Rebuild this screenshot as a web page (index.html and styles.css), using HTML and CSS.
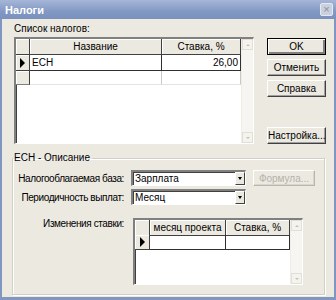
FILE: index.html
```html
<!DOCTYPE html>
<html lang="ru">
<head>
    <meta charset="UTF-8">
    <title>Налоги</title>
    <link rel="stylesheet" href="styles.css">
</head>
<body>
    <div class="window">
        <div class="titlebar">
            <span class="title">Налоги</span>
            <span class="close">&times;</span>
        </div>
        <div class="client">
            <div class="top">
                <div class="taxes">
                    <div class="label">Список налогов:</div>
                    <div class="grid taxes-grid">
                        <div class="sheet">
                            <div class="row head">
                                <div class="ind"></div>
                                <div class="cell">Название</div>
                                <div class="cell">Ставка, %</div>
                            </div>
                            <div class="row current">
                                <div class="ind"><span class="pointer"></span></div>
                                <div class="cell text">ЕСН</div>
                                <div class="cell num">26,00</div>
                            </div>
                            <div class="row blank">
                                <div class="ind"></div>
                                <div class="cell"></div>
                                <div class="cell"></div>
                            </div>
                        </div>
                        <div class="vscroll">
                            <span class="arrow up"></span>
                            <span class="arrow down"></span>
                        </div>
                    </div>
                </div>
                <div class="buttons">
                    <button class="btn default">OK</button>
                    <button class="btn">Отменить</button>
                    <button class="btn">Справка</button>
                    <button class="btn setup">Настройка...</button>
                </div>
            </div>

            <fieldset class="group">
                <legend>ЕСН - Описание</legend>
                <div class="field-row">
                    <label class="caption">Налогооблагаемая база:</label>
                    <div class="combo">
                        <span class="value">Зарплата</span>
                        <span class="drop"></span>
                    </div>
                    <button class="btn formula" disabled>Формула...</button>
                </div>
                <div class="field-row second">
                    <label class="caption">Периодичность выплат:</label>
                    <div class="combo">
                        <span class="value">Месяц</span>
                        <span class="drop"></span>
                    </div>
                </div>
                <div class="rates-row">
                    <label class="caption">Изменения ставки:</label>
                    <div class="grid rates-grid">
                        <div class="sheet">
                            <div class="row head">
                                <div class="ind"></div>
                                <div class="cell">месяц проекта</div>
                                <div class="cell">Ставка, %</div>
                            </div>
                            <div class="row current">
                                <div class="ind"><span class="pointer"></span></div>
                                <div class="cell"></div>
                                <div class="cell"></div>
                            </div>
                        </div>
                        <div class="vscroll">
                            <span class="arrow up"></span>
                            <span class="arrow down"></span>
                        </div>
                    </div>
                </div>
            </fieldset>
        </div>
    </div>
</body>
</html>
```

FILE: styles.css
```css
body {
    margin: 0;
    font-family: 'Liberation Sans', Arial, sans-serif;
    font-size: 10px;
    color: #000;
    background-color: #ece9e1;
}

.window {
    box-sizing: border-box;
    width: 336px;
    height: 300px;
    background-color: #ece9e1;
    border-left: 2px solid #8196c0;
    border-right: 2px solid #8196c0;
    border-bottom: 3px solid #8196c0;
}

.titlebar {
    height: 19px;
    margin: 0 -2px;
    padding: 0 2px 0 5px;
    display: flex;
    align-items: center;
    justify-content: space-between;
    background: linear-gradient(to bottom, #a6b6d7, #8298c4 60%, #7b91bd);
}

.title {
    color: #fff;
    font-size: 11px;
    font-weight: bold;
}

.close {
    width: 11px;
    height: 11px;
    margin-right: 1px;
    border: 1px solid #e6e9f0;
    border-radius: 2px;
    background-color: #c9d0de;
    color: #8a8f99;
    font-size: 11px;
    line-height: 10px;
    text-align: center;
}

.client {
    padding: 4px 9px 0 10px;
}

.top {
    display: flex;
    height: 121px;
}

.taxes {
    margin-left: 2px;
    width: 240px;
}

.label {
    height: 14px;
    line-height: 12px;
}

/* grids */

.grid {
    display: flex;
    box-sizing: border-box;
    background-color: #fff;
    border-top: 2px solid #808080;
    border-left: 2px solid #808080;
    border-right: 1px solid #fff;
    border-bottom: 1px solid #fff;
    box-shadow: inset 1px 1px 0 #404040;
}

.taxes-grid {
    height: 107px;
}

.sheet {
    flex: 1;
}

.row {
    display: grid;
}

.taxes-grid .row {
    grid-template-columns: 14px 132px 79px;
}

.rates-grid .row {
    grid-template-columns: 15px 76px 64px;
}

.row.head {
    height: 16px;
}

.row.current {
    height: 16px;
}

.row.blank {
    height: 14px;
}

.rates-grid .row.head,
.rates-grid .row.current {
    height: 15px;
}

.ind {
    display: flex;
    align-items: center;
    justify-content: center;
    background-color: #ece9e1;
    border-right: 1px solid #404040;
    border-bottom: 1px solid #404040;
    box-shadow: inset 1px 1px 0 #fff;
}

.head .cell {
    background-color: #ece9e1;
    border-right: 1px solid #404040;
    border-bottom: 1px solid #404040;
    box-shadow: inset 1px 1px 0 #fff;
    text-align: center;
    line-height: 15px;
}

.current .cell {
    border-right: 1px solid #303030;
    border-bottom: 1px solid #303030;
    line-height: 15px;
    padding: 0 2px;
}

.cell.num {
    text-align: right;
}

.blank .ind {
    border-bottom-color: #808080;
}

.blank .cell {
    border-right: 1px solid #c8c8c8;
    border-bottom: 1px solid #e4e4e4;
}

.pointer {
    width: 0;
    height: 0;
    border-left: 5px solid #000;
    border-top: 5px solid transparent;
    border-bottom: 5px solid transparent;
}

.vscroll {
    width: 11px;
    display: flex;
    flex-direction: column;
    justify-content: space-between;
    background-color: #f6f5f1;
    border-left: 1px solid #eeede8;
}

.arrow {
    display: flex;
    align-items: center;
    justify-content: center;
    box-sizing: border-box;
    width: 11px;
    height: 11px;
    border: 1px solid #e2e0d6;
    background-color: #f4f3ee;
}

.arrow::after {
    content: '';
    border-left: 2px solid transparent;
    border-right: 2px solid transparent;
}

.arrow.up::after {
    border-bottom: 2px solid #c4c2b8;
}

.arrow.down::after {
    border-top: 2px solid #c4c2b8;
}

/* buttons */

.buttons {
    display: flex;
    flex-direction: column;
    gap: 4px;
    margin-left: 13px;
    padding-top: 15px;
    width: 59px;
}

.btn {
    box-sizing: border-box;
    height: 17px;
    padding: 0;
    font-family: inherit;
    font-size: 10px;
    color: #000;
    background-color: #ece9e1;
    border: 1px solid;
    border-color: #fff #404040 #404040 #fff;
    box-shadow: inset -1px -1px 0 #a0a0a0;
}

.btn.default {
    border: 1px solid #000;
    box-shadow: inset 1px 1px 0 #fff, inset -2px -2px 0 #808080;
}

.btn.setup {
    margin-top: auto;
}

.btn.formula {
    width: 62px;
    height: 16px;
    margin-left: 7px;
    color: #b4b2aa;
    border-color: #fff #b8b6ae #b8b6ae #fff;
    box-shadow: inset -1px -1px 0 #d8d6ce;
}

/* description group */

.group {
    box-sizing: border-box;
    height: 143px;
    margin: 8px 0 0;
    padding: 0;
    border: 1px solid #d2d0c6;
    box-shadow: inset 1px 1px 0 #fff, 1px 1px 0 #fff;
}

.group legend {
    padding: 0 2px 0 1px;
    margin-left: 0;
    line-height: 12px;
}

.field-row {
    display: flex;
    align-items: center;
    margin-top: 6px;
}

.field-row.second {
    margin-top: 3px;
}

.caption {
    width: 111px;
    flex-shrink: 0;
    text-align: right;
    white-space: nowrap;
    letter-spacing: -0.4px;
}

.combo {
    display: flex;
    align-items: center;
    justify-content: space-between;
    box-sizing: border-box;
    width: 115px;
    height: 16px;
    margin-left: 7px;
    background-color: #fff;
    border-top: 2px solid #808080;
    border-left: 2px solid #808080;
    border-right: 1px solid #fff;
    border-bottom: 1px solid #fff;
    box-shadow: inset 1px 1px 0 #404040;
}

.combo .value {
    padding-left: 2px;
}

.drop {
    display: flex;
    align-items: center;
    justify-content: center;
    box-sizing: border-box;
    width: 10px;
    height: 13px;
    background-color: #ece9e1;
    border: 1px solid;
    border-color: #fff #404040 #404040 #fff;
}

.drop::after {
    content: '';
    border-left: 2px solid transparent;
    border-right: 2px solid transparent;
    border-top: 3px solid #000;
}

.rates-row {
    display: flex;
    align-items: flex-start;
    margin-top: 13px;
}

.rates-row .caption {
    line-height: 11px;
}

.rates-grid {
    width: 170px;
    height: 67px;
    margin-left: 9px;
}
```
